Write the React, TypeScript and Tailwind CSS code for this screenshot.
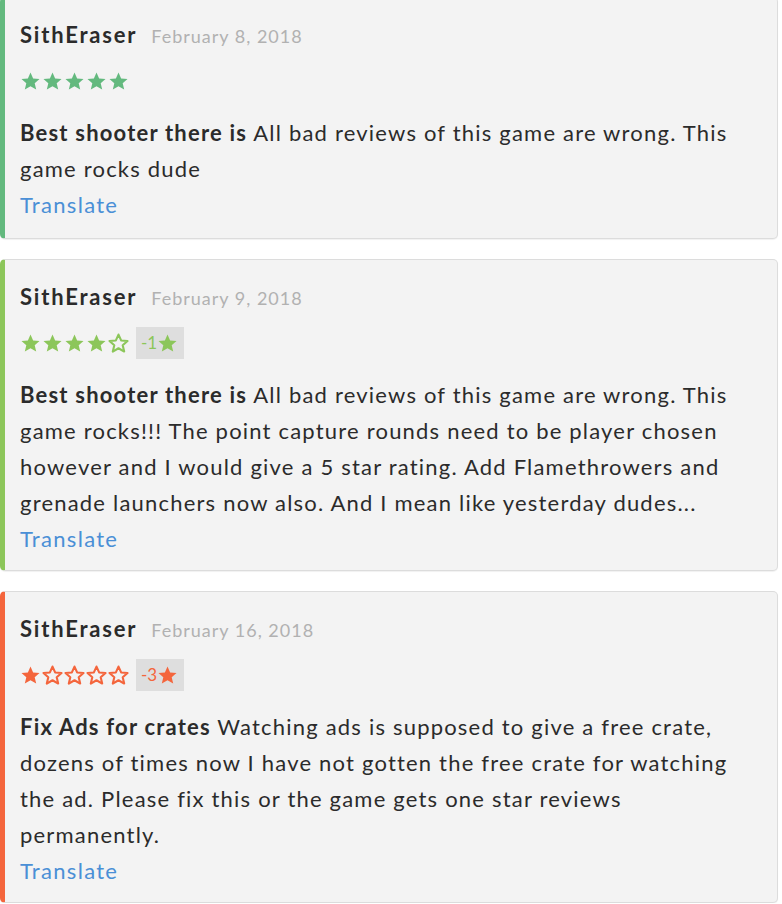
import React from "react"

type Review = {
  date: string
  stars: number
  diff?: number
  color: string
  title: string
  body: string
}

const reviews: Review[] = [
  {
    date: "February 8, 2018",
    stars: 5,
    color: "#63b97e",
    title: "Best shooter there is",
    body: "All bad reviews of this game are wrong. This game rocks dude",
  },
  {
    date: "February 9, 2018",
    stars: 4,
    diff: -1,
    color: "#8cc65a",
    title: "Best shooter there is",
    body: "All bad reviews of this game are wrong. This game rocks!!! The point capture rounds need to be player chosen however and I would give a 5 star rating. Add Flamethrowers and grenade launchers now also. And I mean like yesterday dudes...",
  },
  {
    date: "February 16, 2018",
    stars: 1,
    diff: -3,
    color: "#f4653c",
    title: "Fix Ads for crates",
    body: "Watching ads is supposed to give a free crate, dozens of times now I have not gotten the free crate for watching the ad. Please fix this or the game gets one star reviews permanently.",
  },
]

const Star = ({ filled, color, size = 21 }: { filled: boolean; color: string; size?: number }) => (
  <svg width={size} height={size} viewBox="0 0 24 24">
    <path
      d="M12 1.8l3 6.7 7.3.7-5.5 4.8 1.7 7.2L12 17.4l-6.5 3.8 1.7-7.2-5.5-4.8 7.3-.7z"
      fill={filled ? color : "none"}
      stroke={color}
      strokeWidth={filled ? 0 : 2.4}
      strokeLinejoin="round"
    />
  </svg>
)

const Card = ({ r, first }: { r: Review; first: boolean }) => (
  <div
    className={`w-[778px] rounded-[5px] border border-[#dcdcdc] border-l-[5px] bg-[#f3f3f3] pl-[15px] pr-3 pt-[23px] shadow-[0_1px_1px_rgba(0,0,0,0.06)] ${first ? "pb-[15px]" : "pb-[13px]"}`}
    style={{ borderLeftColor: r.color }}
  >
    <div className="flex items-baseline gap-[14px] leading-7">
      <span className="text-[22px] font-bold tracking-[1.8px] text-[#2b2b2b]">SithEraser</span>
      <span className="text-[18px] tracking-[1px] text-[#b1b1b1]">{r.date}</span>
    </div>
    <div className="mt-[15px] flex h-8 items-center">
      <div className="flex gap-[1px]">
        {[0, 1, 2, 3, 4].map((i) => (
          <Star key={i} filled={i < r.stars} color={r.color} />
        ))}
      </div>
      {r.diff !== undefined && (
        <div className="ml-[7px] flex h-8 items-center bg-[#dedede] pl-[5px] pr-[6px] text-[17px]" style={{ color: r.color }}>
          <span>{r.diff}</span>
          <Star filled color={r.color} size={21} />
        </div>
      )}
    </div>
    <p className="mt-[18px] text-[22px] leading-9 tracking-[1.2px] text-[#2b2b2b]">
      <b className="font-bold">{r.title}</b> {r.body}
    </p>
    <div className="text-[22px] leading-9 tracking-[1.3px] text-[#4a8fd6]">Translate</div>
  </div>
)

export default function App() {
  return (
    <div className="min-h-[904px] bg-white font-['Lato','Liberation_Sans',sans-serif]">
      <div className="-mt-[3px] flex flex-col gap-5">
        {reviews.map((r, i) => (
          <Card key={i} r={r} first={i === 0} />
        ))}
      </div>
    </div>
  )
}
